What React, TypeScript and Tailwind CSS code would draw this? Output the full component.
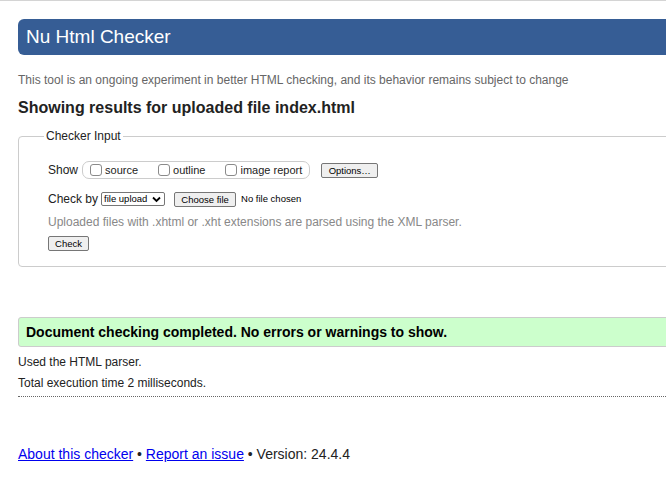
import React from "react";

function Checkbox() {
  return <span className="inline-block w-[12px] h-[12px] border border-[#8a8a8a] rounded-[3px] bg-white shrink-0" />;
}

export default function App() {
  return (
    <div className="w-[666px] h-[480px] overflow-hidden bg-white text-[#222] font-['Liberation_Sans',Arial,sans-serif]">
      <div className="h-[1px] w-full bg-[#d4d4d4]" />
      <div className="pl-[18px] w-[760px]">
        <div className="mt-[18px] h-[36px] rounded-[6px] bg-[#365d95] pl-[8px] text-white text-[19px] leading-[36px]">
          Nu Html Checker
        </div>
        <p className="mt-[17px] text-[12px] leading-[16px] text-[#666]">
          This tool is an ongoing experiment in better HTML checking, and its behavior remains subject to change
        </p>
        <h2 className="mt-[10px] text-[16px] leading-[20px] font-bold text-[#222]">
          Showing results for uploaded file index.html
        </h2>
        <fieldset className="mt-[11px] border border-[#cccccc] rounded-[4px] pl-[29px] pb-[15px]">
          <legend className="ml-[-4px] px-[2px] text-[12px] leading-[14px] text-[#222]">Checker Input</legend>
          <div className="mt-[18px] flex items-center h-[18px]">
            <span className="text-[12px] leading-[16px]">Show</span>
            <div className="ml-[4px] h-[18px] border border-[#cccccc] rounded-[7px] pl-[7px] pr-[7px] flex items-center">
              <Checkbox />
              <span className="ml-[3px] text-[11px] leading-[14px]">source</span>
              <span className="ml-[20px]" />
              <Checkbox />
              <span className="ml-[3px] text-[11px] leading-[14px]">outline</span>
              <span className="ml-[20px]" />
              <Checkbox />
              <span className="ml-[3px] text-[11px] leading-[14px]">image report</span>
            </div>
            <button className="ml-[11px] h-[15px] w-[57px] border border-[#767676] rounded-[2px] bg-[#efefef] text-[9.5px] leading-[13px] text-black">
              Options…
            </button>
          </div>
          <div className="mt-[12px] flex items-center h-[16px]">
            <span className="text-[12px] leading-[16px]">Check by</span>
            <span className="ml-[3px] h-[14px] w-[64px] border border-[#767676] rounded-[2px] bg-white flex items-center pl-[2px] pr-[3px] text-[9.5px] leading-[12px] text-black">
              <span>file upload</span>
              <svg className="ml-auto" width="9" height="7" viewBox="0 0 9 7">
                <path d="M1 1.5 L4.5 5 L8 1.5" fill="none" stroke="#000" strokeWidth="1.8" />
              </svg>
            </span>
            <button className="ml-[9px] h-[15px] w-[62px] border border-[#767676] rounded-[2px] bg-[#efefef] text-[9.5px] leading-[13px] text-black">
              Choose file
            </button>
            <span className="ml-[5px] text-[9.5px] leading-[12px] text-black">No file chosen</span>
          </div>
          <p className="mt-[7px] text-[12px] leading-[16px] text-[#888]">
            Uploaded files with .xhtml or .xht extensions are parsed using the XML parser.
          </p>
          <button className="mt-[6px] block h-[15px] w-[41px] border border-[#767676] rounded-[2px] bg-[#efefef] text-[9.5px] leading-[13px] text-black">
            Check
          </button>
        </fieldset>
        <div className="mt-[50px] h-[30px] border border-[#cccccc] rounded-[3px] bg-[#ccffcc] pl-[7px] flex items-center">
          <span className="text-[14px] leading-[18px] font-bold text-black">
            Document checking completed. No errors or warnings to show.
          </span>
        </div>
        <p className="mt-[7px] text-[12px] leading-[16px]">Used the HTML parser.</p>
        <p className="mt-[5px] text-[12px] leading-[16px]">Total execution time 2 milliseconds.</p>
        <div className="mt-[5px] border-t border-dotted border-[#666]" />
        <p className="mt-[48px] text-[14px] leading-[18px] text-[#222]">
          <a href="#" className="text-[#0000ee] underline">About this checker</a>
          {" • "}
          <a href="#" className="text-[#0000ee] underline">Report an issue</a>
          {" • Version: 24.4.4"}
        </p>
      </div>
    </div>
  );
}
